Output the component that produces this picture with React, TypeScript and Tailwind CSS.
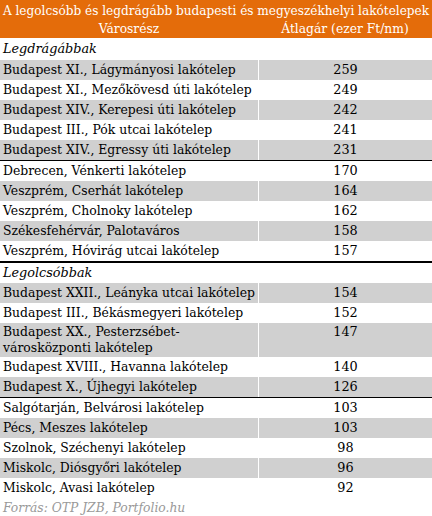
import React from "react";

type Row = { name: string; value: string; grey: boolean; border?: "thin" | "thick"; tall?: boolean };

const top: Row[] = [
  { name: "Budapest XI., Lágymányosi lakótelep", value: "259", grey: true },
  { name: "Budapest XI., Mezőkövesd úti lakótelep", value: "249", grey: false },
  { name: "Budapest XIV., Kerepesi úti lakótelep", value: "242", grey: true },
  { name: "Budapest III., Pók utcai lakótelep", value: "241", grey: false },
  { name: "Budapest XIV., Egressy úti lakótelep", value: "231", grey: true, border: "thin" },
  { name: "Debrecen, Vénkerti lakótelep", value: "170", grey: false },
  { name: "Veszprém, Cserhát lakótelep", value: "164", grey: true },
  { name: "Veszprém, Cholnoky lakótelep", value: "162", grey: false },
  { name: "Székesfehérvár, Palotaváros", value: "158", grey: true },
  { name: "Veszprém, Hóvirág utcai lakótelep", value: "157", grey: false, border: "thick" },
];

const bottom: Row[] = [
  { name: "Budapest XXII., Leányka utcai lakótelep", value: "154", grey: true },
  { name: "Budapest III., Békásmegyeri lakótelep", value: "152", grey: false },
  { name: "", value: "147", grey: true, tall: true },
  { name: "Budapest XVIII., Havanna lakótelep", value: "140", grey: false },
  { name: "Budapest X., Újhegyi lakótelep", value: "126", grey: true, border: "thin" },
  { name: "Salgótarján, Belvárosi lakótelep", value: "103", grey: false },
  { name: "Pécs, Meszes lakótelep", value: "103", grey: true },
  { name: "Szolnok, Széchenyi lakótelep", value: "98", grey: false },
  { name: "Miskolc, Diósgyőri lakótelep", value: "96", grey: true },
  { name: "Miskolc, Avasi lakótelep", value: "92", grey: false },
];

function DataRow({ r }: { r: Row }) {
  const bg = r.grey ? "bg-[#d0d0d0]" : "bg-white";
  const border =
    r.border === "thin"
      ? "border-b border-black"
      : r.border === "thick"
      ? "border-b-2 border-black"
      : "";
  return (
    <div className={`grid grid-cols-[258px_1fr] gap-x-px ${border}`}>
      <div
        className={`${bg} pl-[3px] whitespace-nowrap ${r.tall ? "h-[34px] leading-[16px] pt-[1px]" : "h-[20px] leading-[20px]"}`}
      >
        {r.tall ? (
          <>
            <div>Budapest XX., Pesterzsébet-</div>
            <div>városközponti lakótelep</div>
          </>
        ) : (
          r.name
        )}
      </div>
      <div className={`${bg} text-center text-[12.8px] ${r.tall ? "h-[34px] leading-[18px]" : "h-[20px] leading-[20px]"}`}>
        {r.value}
      </div>
    </div>
  );
}

export default function App() {
  return (
    <div
      className="w-[432px] h-[516px] bg-white text-black text-[12.4px] overflow-hidden"
      style={{ fontFamily: '"DejaVu Serif", "Liberation Serif", serif' }}
    >
      <div className="bg-[#e46c0a] text-white h-[38px] flex flex-col">
        <div className="text-center text-[12.1px] leading-[19px] pt-[2px] whitespace-nowrap">
          A legolcsóbb és legdrágább budapesti és megyeszékhelyi lakótelepek
        </div>
        <div className="grid grid-cols-[258px_1fr] text-[12.3px] leading-[17px]">
          <div className="text-center">Városrész</div>
          <div className="text-center">Átlagár (ezer Ft/nm)</div>
        </div>
      </div>
      <div className="h-[22px] leading-[22px] pl-[3px] italic text-[12.8px]">Legdrágábbak</div>
      {top.map((r, i) => (
        <DataRow key={i} r={r} />
      ))}
      <div className="h-[20px] leading-[20px] pl-[3px] italic text-[12.8px]">Legolcsóbbak</div>
      {bottom.map((r, i) => (
        <DataRow key={i} r={r} />
      ))}
      <div className="h-[20px] leading-[20px] pl-[3px] italic text-[12.3px] text-[#999999]">
        Forrás: OTP JZB, Portfolio.hu
      </div>
    </div>
  );
}
